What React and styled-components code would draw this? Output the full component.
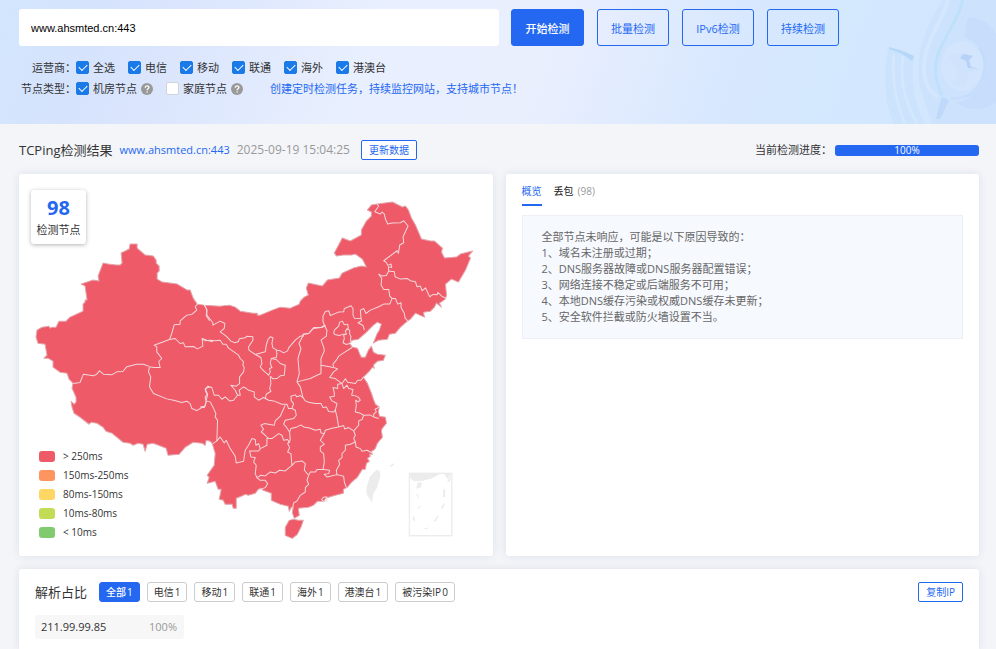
import { useState } from "react";
import styled, { createGlobalStyle } from "styled-components";

const GlobalStyle = createGlobalStyle`
  * {
    box-sizing: border-box;
  }

  body {
    margin: 0;
    background-color: #f3f5f9;
    color: #333333;
    font-family: "Open Sans", "Noto Sans CJK SC", sans-serif;
    font-size: 11px;
    line-height: 16px;
  }

  button,
  input {
    font-family: inherit;
  }
`;

const Page = styled.div`
  display: flex;
  flex-direction: column;
  min-height: 100vh;
`;

const Header = styled.header`
  position: relative;
  padding: 9px 17px 25px 19px;
  background: linear-gradient(
    110deg,
    #d3e6fe 0%,
    #d6e3fd 10%,
    #dde7fd 22%,
    #e8effe 36%,
    #eaeffe 54%,
    #d8e8fe 72%,
    #d3e8fe 84%,
    #d2e5fd 100%
  );
`;

const Decoration = styled.svg`
  position: absolute;
  top: 0;
  right: 0;
  width: 120px;
  height: 100%;
`;

const SearchRow = styled.form`
  display: flex;
  gap: 13px;
  margin-bottom: 11px;
`;

const SearchInput = styled.input`
  width: 50%;
  height: 37px;
  padding: 0 12px;
  border: none;
  border-radius: 3px;
  background-color: #ffffff;
  color: #000000;
  font-family: "Liberation Sans", sans-serif;
  font-size: 11px;
  margin-right: -1px;
`;

const SearchButton = styled.button`
  position: relative;
  height: 37px;
  padding: 0;
  flex: 0 0 ${(props) => (props.$primary ? "73px" : "72px")};
  border: 1px solid #2468f2;
  border-radius: 3px;
  background-color: ${(props) => (props.$primary ? "#2468f2" : "transparent")};
  color: ${(props) => (props.$primary ? "#ffffff" : "#2468f2")};
  font-size: 11px;
  font-weight: ${(props) => (props.$primary ? 500 : 400)};
  cursor: pointer;
`;

const FilterRow = styled.div`
  display: flex;
  align-items: center;
  gap: 13px;
  height: 21px;
`;

const FilterName = styled.span`
  width: 57px;
  margin-right: -13px;
  text-align: right;
`;

const FilterItem = styled.label`
  display: flex;
  align-items: center;
  gap: 4px;
  cursor: pointer;
`;

const Checkbox = styled.input`
  appearance: none;
  width: 13px;
  height: 13px;
  margin: 0;
  border: 1px solid #cfd3da;
  border-radius: 2px;
  background-color: #ffffff;
  display: grid;
  place-items: center;

  &:checked {
    border-color: #1a7ae8;
    background-color: #1a7ae8;
  }

  &:checked::after {
    content: "";
    width: 7px;
    height: 4px;
    margin-bottom: 2px;
    border-left: 1px solid #ffffff;
    border-bottom: 1px solid #ffffff;
    transform: rotate(-45deg);
  }
`;

const Help = styled.svg`
  width: 12px;
  height: 12px;
`;

const TaskLink = styled.a`
  margin-left: 14px;
  color: #2468f2;
  text-decoration: none;
`;

const Main = styled.main`
  display: flex;
  flex: 1;
  flex-direction: column;
  padding: 0 17px 0 19px;
`;

const ResultBar = styled.div`
  display: flex;
  align-items: center;
  gap: 7px;
  height: 50px;
  padding-top: 2px;
`;

const ResultTitle = styled.h1`
  margin: 0;
  font-size: 13px;
  font-weight: 400;
`;

const Host = styled.a`
  color: #2468f2;
  text-decoration: none;
`;

const Time = styled.time`
  color: #999999;
  font-size: 12px;
`;

const SmallButton = styled.button`
  height: 20px;
  padding: 0 7px;
  border: 1px solid #2468f2;
  border-radius: 2px;
  background-color: #ffffff;
  color: #2468f2;
  font-size: 10px;
  line-height: 16px;
  cursor: pointer;
`;

const Refresh = styled(SmallButton)`
  margin-left: 4px;
`;

const ProgressLabel = styled.span`
  margin-left: auto;
`;

const Progress = styled.div`
  width: 15%;
  margin-left: -4px;
  border-radius: 3px;
  background-color: #d8dce5;
`;

const ProgressFill = styled.div`
  border-radius: 3px;
  background-color: #2468f2;
  color: #ffffff;
  font-size: 10px;
  line-height: 11px;
  text-align: center;
`;

const Panels = styled.div`
  display: grid;
  grid-template-columns: 1fr 1fr;
  gap: 13px;
  margin-bottom: 13px;
`;

const Card = styled.section`
  position: relative;
  border-radius: 3px;
  background-color: #ffffff;
  box-shadow: 0 0 8px rgba(60, 70, 100, 0.12);
`;

const MapCard = styled(Card)`
  padding: 16px 12px 10px 11px;
`;

const Map = styled.svg`
  display: block;
  width: 100%;
`;

const Count = styled.div`
  position: absolute;
  top: 16px;
  left: 12px;
  width: 55px;
  padding: 8px 0 6px;
  border-radius: 3px;
  background-color: #ffffff;
  box-shadow: 0 1px 4px rgba(0, 0, 0, 0.3);
  text-align: center;
`;

const CountNumber = styled.strong`
  display: block;
  margin-bottom: 4px;
  color: #2468f2;
  font-size: 20px;
  line-height: 20px;
`;

const Legend = styled.ul`
  position: absolute;
  bottom: 14px;
  left: 20px;
  margin: 0;
  padding: 0;
  list-style: none;
`;

const LegendItem = styled.li`
  display: flex;
  align-items: center;
  gap: 8px;
  font-size: 10px;
  line-height: 19px;
`;

const Swatch = styled.span`
  width: 16px;
  height: 11px;
  border-radius: 3px;
  background-color: ${(props) => props.$color};
`;

const OverviewCard = styled(Card)`
  padding: 8px 16px 16px;
`;

const Tabs = styled.div`
  display: flex;
  gap: 12px;
  margin-bottom: 9px;
`;

const Tab = styled.button`
  height: 24px;
  padding: 0 0 4px;
  border: none;
  border-bottom: 2px solid ${(props) => (props.$active ? "#2468f2" : "transparent")};
  background: none;
  color: ${(props) => (props.$active ? "#2468f2" : "#222222")};
  font-size: 10px;
  line-height: 16px;
  cursor: pointer;
`;

const TabCount = styled.span`
  margin-left: 4px;
  color: #999999;
`;

const Notice = styled.div`
  padding: 13px 19px;
  border: 1px solid #edf0f5;
  background-color: #f6f9fe;
  color: #666666;
`;

const NoticeLine = styled.p`
  margin: 0;
`;

const IpCard = styled(Card)`
  flex: 1;
  padding: 13px 16px 10px;
  border-radius: 3px 3px 0 0;
`;

const IpHeader = styled.div`
  display: flex;
  align-items: center;
  gap: 7px;
  margin-bottom: 13px;
`;

const IpTitle = styled.h2`
  margin: 0 5px 0 0;
  font-size: 13px;
  font-weight: 400;
`;

const Tag = styled.button`
  height: 20px;
  padding: 0 6px;
  border: 1px solid ${(props) => (props.$active ? "#2468f2" : "#cccccc")};
  border-radius: 3px;
  background-color: ${(props) => (props.$active ? "#2468f2" : "#ffffff")};
  color: ${(props) => (props.$active ? "#ffffff" : "#333333")};
  font-size: 10px;
  font-weight: ${(props) => (props.$active ? 500 : 400)};
  line-height: 16px;
  cursor: pointer;
`;

const TagCount = styled.span`
  margin-left: 1px;
`;

const CopyButton = styled(SmallButton)`
  margin-left: auto;
`;

const IpItem = styled.div`
  display: flex;
  justify-content: space-between;
  width: 149px;
  padding: 4px 7px 4px 6px;
  border-radius: 3px;
  background-color: #f7f7f7;
`;

const Percent = styled.span`
  color: #999999;
`;

const carriers = ["全选", "电信", "移动", "联通", "海外", "港澳台"];

const legend = [
  { color: "#ef5a68", text: "> 250ms" },
  { color: "#fe9460", text: "150ms-250ms" },
  { color: "#fdd663", text: "80ms-150ms" },
  { color: "#c3dc56", text: "10ms-80ms" },
  { color: "#7fcb6d", text: "< 10ms" },
];

const reasons = [
  "全部节点未响应，可能是以下原因导致的：",
  "1、域名未注册或过期；",
  "2、DNS服务器故障或DNS服务器配置错误；",
  "3、网络连接不稳定或后端服务不可用；",
  "4、本地DNS缓存污染或权威DNS缓存未更新；",
  "5、安全软件拦截或防火墙设置不当。",
];

const tags = [
  { name: "全部", count: 1 },
  { name: "电信", count: 1 },
  { name: "移动", count: 1 },
  { name: "联通", count: 1 },
  { name: "海外", count: 1 },
  { name: "港澳台", count: 1 },
  { name: "被污染IP", count: 0 },
];

const mainland =
  "36,337 37,330 42,327 49,326 50,328 52,327 56,327 59,321 66,321 70,317 83,311 83,304 85,302 85,300 87,300 85,286 81,284 93,280 99,281 98,276 103,263 108,264 116,265 120,265 122,263 121,253 129,249 130,244 137,244 137,248 145,255 153,256 156,260 156,263 159,266 159,271 157,273 157,279 162,282 177,284 187,290 190,290 193,298 197,304 204,305 220,306 229,305 235,307 240,311 253,313 257,313 257,315 260,315 272,310 280,307 290,308 299,304 300,301 304,297 308,295 306,288 308,283 322,286 327,280 339,278 342,273 353,268 361,266 366,267 362,259 355,254 351,255 347,255 343,255 336,256 334,253 342,238 350,241 361,235 361,230 366,221 371,216 371,212 367,210 371,205 377,204 392,202 402,207 405,206 408,210 411,218 415,225 418,232 421,239 430,241 434,241 442,248 441,252 444,258 456,257 460,254 472,251 468,256 470,258 465,270 458,282 451,279 445,284 446,295 445,299 439,303 441,307 436,303 434,307 430,311 423,312 424,317 415,313 410,319 407,321 400,327 395,333 389,334 387,339 378,340 373,343 377,333 379,330 381,324 377,322 373,325 365,333 358,339 352,340 349,343 352,347 357,348 359,353 361,357 365,357 368,350 371,346 373,352 377,354 385,355 383,360 377,361 373,365 374,368 372,367 369,371 367,373 363,377 367,383 371,393 373,399 375,404 379,407 378,411 379,416 385,417 386,423 382,428 381,430 382,437 377,443 375,448 373,450 371,451 372,454 369,454 370,456 367,458 369,461 366,463 365,469 362,469 357,477 351,482 347,487 343,489 343,493 335,495 325,498 324,501 317,501 313,505 308,507 298,508 299,515 294,518 292,512 293,507 291,507 289,511 288,506 284,505 280,504 271,500 271,493 263,490 261,488 258,489 255,493 248,495 245,494 241,496 236,498 236,508 233,508 232,504 225,504 223,500 219,499 221,489 218,489 215,481 207,483 209,477 207,475 214,465 215,453 212,443 210,441 206,440 205,445 202,443 193,442 185,447 179,454 168,455 166,448 161,446 153,443 147,444 145,451 143,444 138,443 133,445 130,443 123,442 117,437 112,433 106,431 103,427 97,423 91,422 89,424 80,417 74,413 72,407 71,401 74,404 76,402 76,397 72,388 73,383 69,379 67,373 60,372 53,367 53,361 48,358 44,358 47,355 45,344 38,343";

// Province borders, grouped by the part of the country they belong to
const westBorders = [
  "532,222 525,230 530,240 515,253 500,255 480,272 480,282 462,284 455,310 448,328",
  "553,225 560,240 558,256 568,272",
  "448,328 402,345 410,350 410,365 425,385 416,394 420,412 402,412 388,410",
  "448,328 465,325 480,340 490,338 495,350 520,349 532,356 548,348 546,325 560,330 578,335",
  "388,410 385,425 392,440 388,470 400,490 440,506 460,510 485,517 500,513 510,520 515,535 530,541 545,532 552,532 558,515 555,500 562,492 555,475 570,470",
  "160,460 180,457 190,432 220,437 230,432 238,422 250,432 275,434 290,425 308,424 320,410 350,402 370,402 386,408",
];

const eastBorders = [
  "12,74 20,88 20,105 38,128 38,135 60,123 74,130 72,145 60,155 78,168 92,183 104,188 115,184 117,176 135,173 140,168 158,170 158,180 145,200 146,210 165,223 195,215 198,195 203,178 210,170 218,173 215,190 218,203 230,210 240,212 250,218 262,212 265,203 285,180 300,168 308,167 310,162 325,160 340,145 362,142 372,136",
  "5,175 15,182 30,180 45,182 60,180 68,192 78,192 85,204 115,225 120,235 130,245 128,255 132,262 130,275 118,290 118,310 108,318 92,315 105,330 112,345",
  "165,223 182,232 185,250 180,260 188,270 205,285 210,275 208,265 215,262 210,250 213,235 228,232 230,220 228,210",
  "213,235 228,238 240,250 255,255 252,285 240,287 230,295 218,296 210,288",
  "210,288 212,310 208,325 212,333 198,342 195,357",
  "308,167 296,190 302,205 293,235 297,280 290,305",
  "290,305 330,295 350,285 362,280 362,255",
  "372,136 380,150 378,168 362,180 370,200 372,212 362,235 362,255 388,260 398,262",
  "455,202 430,218 415,228 408,240 398,252 400,262 412,266 400,275 388,292 405,295 425,310 435,296 442,306 465,310 472,300 482,300 490,290",
  "290,305 300,320 308,352 300,346 290,350 285,344 272,348 273,362 280,370 275,385",
  "308,352 315,362 325,366 345,370 362,370 368,382 378,380 385,394 400,395 405,390",
  "425,310 412,312 412,325 398,322 402,338 402,348 388,350 395,362 410,370 405,390 410,410 415,440",
  "425,310 430,325 440,315 445,325 458,328 454,345 466,347 475,352 480,360 474,365 466,360 468,375 465,395 478,398 490,405 508,404 520,410",
  "538,380 524,387 528,395 520,402 520,410 535,415",
  "490,405 485,418 475,422 475,435 460,452",
  "415,440 430,436 433,446 445,442 460,452",
  "415,440 395,444 375,450 372,460 362,458 360,447 345,450 328,443 310,440 302,434 290,440 272,445 268,455",
  "275,385 285,390 288,405 280,415 255,420 250,432 258,440 268,455",
  "18,360 22,345 15,330 22,318 35,322 42,345 55,345 65,357 75,350 88,362 100,360 112,345 120,345 117,330 130,320 138,325 145,330 162,335 162,350 175,360 190,352 205,360 220,362 245,372 260,372 265,385 275,385",
  "255,375 248,390 240,408 225,422 222,435 192,430 182,435 190,447 183,455 195,465 205,475",
  "0,380 15,378 18,362 30,365 38,380 47,400 45,410 52,420 50,482 38,490",
  "50,482 60,470 72,488 78,480 90,505 105,528 108,548 130,543 135,510 145,495 155,475 165,478 167,495 175,490 180,505 200,495 200,475 205,475",
  "205,475 215,475 235,460 245,465 250,480 262,478 268,488",
  "180,505 175,512 148,512 152,530 165,532 160,545 168,555 165,580 170,592 182,585 195,587 210,575 225,578 238,570 255,572 275,555",
  "268,455 270,480 262,490 268,502 262,515 272,520 275,555",
  "275,555 285,545 305,542 315,550 312,570 325,585",
  "170,592 180,600 195,600 202,610 195,622 178,628",
  "372,460 360,480 372,492 360,500 360,512 370,520 372,545 368,568",
  "460,452 465,465 460,475 465,485 450,492 435,495 435,510 425,520 425,532 415,540 418,552 408,570 410,585",
  "465,485 467,500 480,505 485,513 500,510 515,518",
  "325,585 330,575 345,575 350,568 370,568 388,570 385,580 372,582 380,590 410,583 430,588 432,605 438,622",
  "325,585 320,600 325,612 315,622 315,635 300,645 290,662 280,668 277,682",
  "370,650 380,650 380,662 368,662 364,657 370,650",
];

const northeastBorders = [
  "8,440 8,432 25,430 40,412 65,412 75,405",
  "75,410 68,395 68,378 75,364 85,362 90,376 115,366 130,365 132,355 152,347 158,355 158,375 162,384 182,385",
  "182,385 180,360 190,355 197,370 210,360 235,350 250,342 268,342 275,325 268,318 265,298 250,298 242,285 244,265 235,252 245,258 258,256 265,243 282,245 284,260 300,267 320,265 330,272 345,275 350,290 360,288 365,302 375,293 388,320 398,313 410,314 412,307 424,318 437,325",
  "265,243 264,230 274,232 272,222 262,226 258,217 250,212 290,182 294,190 298,165 310,158 308,140 323,108 310,92 300,98 275,99 262,102 255,87 252,72 245,66 240,72 223,65 235,48 230,42",
  "275,325 285,325 292,342 302,338 302,352 312,370 314,384 322,392",
  "182,385 184,392 173,398 188,406 192,420",
  "100,430 102,420 115,408 118,396 126,393 132,404 142,402 144,414 135,422 138,432 128,432 118,436 106,434 100,430",
  "138,416 148,420 148,432 152,440 150,450 156,458",
  "138,432 130,435 132,445 128,458 138,463 148,460",
];

const Border = styled.polyline`
  fill: none;
  stroke: #f3d9dc;
  stroke-width: 3;
  stroke-linejoin: round;
`;

function ChinaMap() {
  return (
    <Map viewBox="30 190 450 356" role="img" aria-label="检测节点地图">
      <g fill="#ef5a68" stroke="#e3a4aa" strokeWidth="1" strokeLinejoin="round">
        <polygon points={mainland} />
        <polygon points="289,520 293,519 298,520 303,520 301,526 297,534 292,538 285,535 285,527" />
      </g>
      <g transform="translate(20 230) scale(0.3333)">
        {westBorders.map((points) => (
          <Border key={points} points={points} />
        ))}
      </g>
      <g transform="translate(200 280) scale(0.3333)">
        {eastBorders.map((points) => (
          <Border key={points} points={points} />
        ))}
      </g>
      <g transform="translate(300 190) scale(0.3333)">
        {northeastBorders.map((points) => (
          <Border key={points} points={points} />
        ))}
      </g>
      <g transform="translate(350 450) scale(0.3333)" fill="#ececec">
        <path d="M78 58 L88 62 L90 78 L80 112 L68 132 L65 158 L60 148 L49 132 L48 112 L58 80Z" />
        <path d="M118 46 L131 38 L130 44 L122 49Z" />
        <rect x="177" y="69" width="127" height="187" fill="none" stroke="#ececec" strokeWidth="4" />
        <path d="M177 70 H270 L245 84 L218 91 L190 93 L177 80Z M281 70 H303 L292 86Z" />
        <path d="M202 96 L216 98 L210 112 L197 115Z M290 93 L303 74 L298 94Z M278 118 L284 116 L285 140 L278 140Z M198 132 L203 132 L204 148Z M270 173 L281 158 L283 163 L276 175Z M198 176 L214 163 L207 173Z M186 197 L192 200 L194 216 L188 208Z M249 213 L262 195 L263 200 L256 213Z M217 235 L235 231 L228 237Z" />
      </g>
    </Map>
  );
}

function HelpIcon() {
  return (
    <Help viewBox="0 0 12 12" aria-hidden="true">
      <circle cx="6" cy="6" r="6" fill="#999999" />
      <path
        d="M4.2 4.7 C4.2 2.2 7.9 2.3 7.9 4.5 C7.9 5.7 6.1 5.8 6.1 7.3"
        fill="none"
        stroke="#ffffff"
        strokeWidth="1.3"
      />
      <circle cx="6.1" cy="9" r="0.8" fill="#ffffff" />
    </Help>
  );
}

function HeaderDecoration() {
  return (
    <Decoration viewBox="0 0 120 124" preserveAspectRatio="xMaxYMin slice" aria-hidden="true">
      <path
        d="M13 47 C7 68 8 102 18 124 H49 C38 105 34 79 38 56 Q27 50 13 47Z"
        fill="#c3dffb"
        opacity="0.5"
      />
      <path d="M13 47 Q26 50 38 56 L36 61 Q25 52 13 49Z" fill="#a6d0f7" opacity="0.6" />
      <path d="M18 54 Q14 88 29 124 M27 56 Q22 90 41 124" fill="none" stroke="#dcebfe" strokeWidth="3" opacity="0.5" />
      <path d="M67 0 C43 35 36 72 48 99 L56 124 H120 V0Z" fill="#c9dffc" opacity="0.6" />
      <path d="M72 0 C68 20 48 40 48 68 Q48 88 62 97" fill="none" stroke="#dcebfe" strokeWidth="4" opacity="0.5" />
      <path d="M87 0 C80 26 62 44 60 64 Q58 80 66 95" fill="none" stroke="#b3dffa" strokeWidth="3" opacity="0.6" />
      <path d="M60 119 Q62 109 66 97 L73 100 L64 119Z" fill="#afcff8" opacity="0.5" />
      <path d="M92 17 Q111 18 120 34 V103 Q98 115 80 103 Q106 97 109 66 Q107 44 88 37Z" fill="#c6dcfb" opacity="0.7" />
      <ellipse cx="86" cy="66" rx="21" ry="25" fill="#d7e7fd" opacity="0.6" />
      <path d="M72 55 L89 53 L96 58 L92 68 L104 70 L93 73 L88 87 L77 84 L82 72Z" fill="#cee2fc" opacity="0.7" />
      <path d="M84 58 L87 54 L97 56 L93 60 L95 67 L104 69 L92 68 L90 61Z" fill="#abcbf3" opacity="0.7" />
      <path d="M103 48 Q114 63 103 84 Q95 100 75 98" fill="none" stroke="#b9d6f9" strokeWidth="2" opacity="0.4" />
    </Decoration>
  );
}

function App() {
  const [host, setHost] = useState("www.ahsmted.cn:443");
  const [tab, setTab] = useState("overview");
  const [tag, setTag] = useState("全部");
  const progress = 100;

  return (
    <Page>
      <GlobalStyle />
      <Header>
        <HeaderDecoration />
        <SearchRow onSubmit={(e) => e.preventDefault()}>
          <SearchInput
            aria-label="检测地址"
            value={host}
            onChange={(e) => setHost(e.target.value)}
          />
          <SearchButton $primary>开始检测</SearchButton>
          <SearchButton type="button">批量检测</SearchButton>
          <SearchButton type="button">IPv6检测</SearchButton>
          <SearchButton type="button">持续检测</SearchButton>
        </SearchRow>
        <FilterRow>
          <FilterName>运营商：</FilterName>
          {carriers.map((name) => (
            <FilterItem key={name}>
              <Checkbox type="checkbox" defaultChecked />
              {name}
            </FilterItem>
          ))}
        </FilterRow>
        <FilterRow>
          <FilterName>节点类型：</FilterName>
          <FilterItem>
            <Checkbox type="checkbox" defaultChecked />
            机房节点
            <HelpIcon />
          </FilterItem>
          <FilterItem>
            <Checkbox type="checkbox" />
            家庭节点
            <HelpIcon />
          </FilterItem>
          <TaskLink href="#task">创建定时检测任务，持续监控网站，支持城市节点！</TaskLink>
        </FilterRow>
      </Header>

      <Main>
        <ResultBar>
          <ResultTitle>TCPing检测结果</ResultTitle>
          <Host href="#host">www.ahsmted.cn:443</Host>
          <Time>2025-09-19 15:04:25</Time>
          <Refresh>更新数据</Refresh>
          <ProgressLabel>当前检测进度：</ProgressLabel>
          <Progress>
            <ProgressFill style={{ width: `${progress}%` }}>{progress}%</ProgressFill>
          </Progress>
        </ResultBar>

        <Panels>
          <MapCard>
            <ChinaMap />
            <Count>
              <CountNumber>98</CountNumber>
              检测节点
            </Count>
            <Legend>
              {legend.map((item) => (
                <LegendItem key={item.text}>
                  <Swatch $color={item.color} />
                  {item.text}
                </LegendItem>
              ))}
            </Legend>
          </MapCard>

          <OverviewCard>
            <Tabs>
              <Tab $active={tab === "overview"} onClick={() => setTab("overview")}>
                概览
              </Tab>
              <Tab $active={tab === "loss"} onClick={() => setTab("loss")}>
                丢包<TabCount>(98)</TabCount>
              </Tab>
            </Tabs>
            <Notice>
              {reasons.map((line) => (
                <NoticeLine key={line}>{line}</NoticeLine>
              ))}
            </Notice>
          </OverviewCard>
        </Panels>

        <IpCard>
          <IpHeader>
            <IpTitle>解析占比</IpTitle>
            {tags.map(({ name, count }) => (
              <Tag key={name} $active={tag === name} onClick={() => setTag(name)}>
                {name}
                <TagCount>{count}</TagCount>
              </Tag>
            ))}
            <CopyButton>复制IP</CopyButton>
          </IpHeader>
          <IpItem>
            211.99.99.85
            <Percent>100%</Percent>
          </IpItem>
        </IpCard>
      </Main>
    </Page>
  );
}

export default App;
